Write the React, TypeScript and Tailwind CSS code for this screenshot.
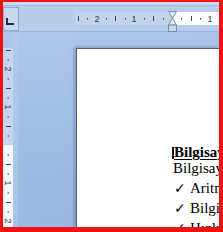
export default function App() {
  const hDots = [12, 31, 50, 69, 88, 106, 125, 144];
  const hHalf = [3, 40, 78, 116];
  const hNums: [number, string][] = [
    [22, "2"],
    [59, "1"],
    [135, "1"],
  ];
  const vDots = [11.5, 30.5, 49.5, 68.5, 87.5, 106.5, 125.5, 144.5, 163.5];
  const vHalf = [2, 40, 78, 116, 154];
  const vNums: [number, string][] = [
    [21, "2"],
    [59, "1"],
    [135, "1"],
    [173, "2"],
  ];

  return (
    <div className="w-[223px] h-[232px] overflow-hidden bg-[#ee1313] pt-[2px] pl-[3px] pr-[4px] pb-[5px]">
      <div className="flex h-full flex-col overflow-hidden bg-[#a9c3e7]">
        {/* window top strip */}
        <div className="h-[4px] shrink-0 border-b border-[#a4bde2] bg-[#c8d9f0]" />

        {/* ruler bar */}
        <div className="flex h-[26px] shrink-0 items-start border-b border-[#9cb7de] bg-[#b8cde9]">
          <div className="mt-[1px] h-[24px] w-[16px] shrink-0 border border-[#8daad4] bg-[#c7d8ef]">
            <svg width="8" height="8" className="ml-[2px] mt-[10px] block">
              <path d="M0 0h2v5h6v2H0z" fill="#1d2c4c" />
            </svg>
          </div>
          <div className="relative ml-[56px] mt-[6px] flex h-[13px] min-w-0 flex-1">
            <div className="w-[97px] shrink-0 bg-[#c2d4ed]" />
            <div className="flex-1 bg-white" />
            <svg width="144" height="13" className="absolute left-0 top-0">
              {hDots.map((x) => (
                <rect key={x} x={x} y={6} width={1} height={1.5} fill="#3a4454" />
              ))}
              {hHalf.map((x) => (
                <rect key={x} x={x} y={4} width={1} height={5} fill="#3a4454" />
              ))}
              {hNums.map(([x, n]) => (
                <text
                  key={x}
                  x={x}
                  y={10}
                  textAnchor="middle"
                  fontSize="9"
                  fontFamily="Liberation Sans, Arial, sans-serif"
                  fill="#333b48"
                >
                  {n}
                </text>
              ))}
            </svg>
            {/* indent marker */}
            <svg width="10" height="22" className="absolute left-[93px] top-[-1px]">
              <path d="M0.5 0.5h8L4.5 7z" fill="#e9eef6" stroke="#7a8dab" />
              <path d="M4.5 7l4 7h-8z" fill="#e9eef6" stroke="#7a8dab" />
              <rect x="0.5" y="14" width="8" height="6.5" fill="#c9d6ea" stroke="#7a8dab" />
            </svg>
          </div>
        </div>

        {/* workspace */}
        <div className="flex min-h-0 flex-1 overflow-hidden bg-[linear-gradient(172deg,#aec7ea_0%,#a3bfe6_45%,#96b5e1_100%)]">
          <div className="flex w-[10px] shrink-0 flex-col pt-[16px]">
            <div className="relative flex flex-1 flex-col">
              <div className="h-[97px] bg-[#c4d6ee]" />
              <div className="flex-1 bg-[#f3f6fb]" />
              <svg width="10" height="180" className="absolute left-0 top-0">
                {vDots.map((y) => (
                  <rect key={y} x={4.5} y={y} width={1.5} height={1} fill="#3a4454" />
                ))}
                {vHalf.map((y) => (
                  <rect key={y} x={3} y={y} width={5} height={1} fill="#3a4454" />
                ))}
                {vNums.map(([y, n]) => (
                  <text
                    key={y}
                    transform={`translate(5 ${y}) rotate(90)`}
                    textAnchor="middle"
                    dominantBaseline="central"
                    fontSize="9"
                    fontFamily="Liberation Sans, Arial, sans-serif"
                    fill="#333b48"
                  >
                    {n}
                  </text>
                ))}
              </svg>
            </div>
          </div>
          <div className="w-[5px] shrink-0 bg-[#b4cbea]/60" />

          <div className="flex min-w-0 flex-1 flex-col pl-[58px] pt-[16px]">
            <div className="min-w-0 flex-1 overflow-hidden border-l border-t border-[#5a6272] bg-white pl-[96px] pt-[95px] font-['Liberation_Serif','Times_New_Roman',serif] text-[15px] text-black shadow-[-2px_-1px_3px_rgba(50,70,110,0.35)]">
              <div className="relative whitespace-nowrap leading-[16px]">
                <span className="absolute left-[-1px] top-[3px] h-[12px] w-[2px] bg-[#0d1438]" />
                <span className="pl-[1px] font-bold underline decoration-1 underline-offset-2">
                  Bilgisayarın Özellikleri
                </span>
              </div>
              <div className="whitespace-nowrap leading-[16px]">Bilgisayar; elektronik bir</div>
              <div className="mt-[2px]">
                {["Aritmetik işlemler yapar", "Bilgileri saklar", "Hızlı çalışır"].map((t) => (
                  <div key={t} className="flex whitespace-nowrap leading-[20px]">
                    <span className="w-[17px] shrink-0 pl-[1px] font-['DejaVu_Sans',sans-serif] text-[14px]">
                      ✓
                    </span>
                    <span>{t}</span>
                  </div>
                ))}
              </div>
            </div>
          </div>
        </div>
      </div>
    </div>
  );
}
